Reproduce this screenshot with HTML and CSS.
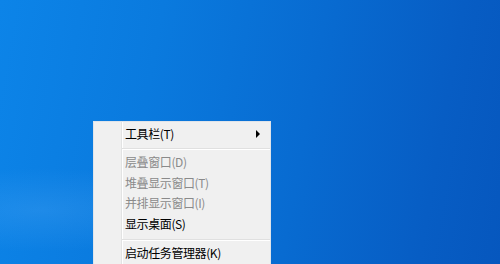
FILE: index.html
```html
<!DOCTYPE html>
<html lang="zh-CN">
<head>
<meta charset="utf-8">
<title>桌面菜单</title>
<link rel="stylesheet" href="styles.css">
</head>
<body>
<div class="desktop">
  <div class="menu">
    <div class="item first"><span>工具栏(T)</span><span class="arrow"></span></div>
    <div class="sep"></div>
    <div class="item disabled"><span>层叠窗口(D)</span></div>
    <div class="item disabled"><span>堆叠显示窗口(T)</span></div>
    <div class="item disabled"><span>并排显示窗口(I)</span></div>
    <div class="item"><span>显示桌面(S)</span></div>
    <div class="sep"></div>
    <div class="item"><span>启动任务管理器(K)</span></div>
  </div>
</div>
</body>
</html>
```
FILE: styles.css
```css
html, body {
  margin: 0;
  padding: 0;
}
body {
  width: 500px;
  height: 264px;
  overflow: hidden;
  font-family: "Noto Sans CJK SC", "Microsoft YaHei", sans-serif;
}
.desktop {
  width: 500px;
  height: 264px;
  box-sizing: border-box;
  padding: 121px 0 0 93px;
  background:
    radial-gradient(ellipse 260px 60px at 40px 210px, rgba(120, 190, 255, 0.18), rgba(120, 190, 255, 0) 70%),
    linear-gradient(100deg, #0c84e8 0%, #0a7ade 30%, #086bd1 60%, #075dc4 85%, #0657be 100%);
  overflow: hidden;
}
.menu {
  width: 176px;
  height: 200px;
  border: 1px solid #dfe4ea;
  padding-top: 1px;
  box-sizing: content-box;
  background: linear-gradient(to right, #f0f0f0 27px, #e2e3e3 27px, #e2e3e3 28px, #ffffff 28px, #ffffff 29px, #f0f0f0 29px);
}
.item {
  height: 20.7px;
  line-height: 20.7px;
  font-size: 12px;
  letter-spacing: -0.4px;
  color: #000000;
  padding: 0 10px 0 31px;
  display: flex;
  align-items: center;
  justify-content: space-between;
  white-space: nowrap;
}
.item.first {
  height: 21px;
  line-height: 21px;
}
.item.disabled {
  color: #8a8a8a;
}
.arrow {
  width: 0;
  height: 0;
  border-left: 4px solid #000;
  border-top: 4px solid transparent;
  border-bottom: 4px solid transparent;
}
.sep {
  margin: 4px 0 2px 28px;
  height: 1px;
  background: #e0e0e0;
  border-bottom: 1px solid #ffffff;
}
```
